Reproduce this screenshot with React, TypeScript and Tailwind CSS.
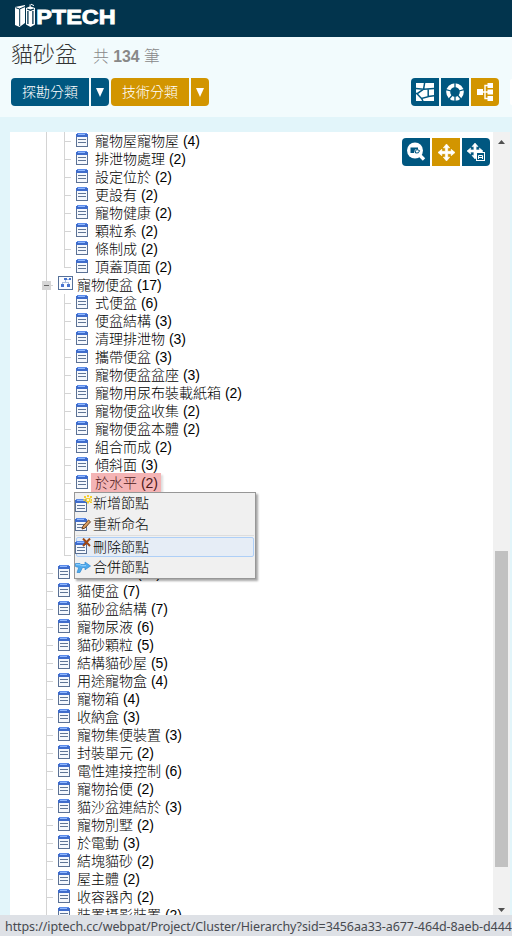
import React from "react";

type Leaf = { label: string; count: number };

const previousChildren: Leaf[] = [
  { label: "寵物屋寵物屋", count: 4 },
  { label: "排泄物處理", count: 2 },
  { label: "設定位於", count: 2 },
  { label: "更設有", count: 2 },
  { label: "寵物健康", count: 2 },
  { label: "顆粒系", count: 2 },
  { label: "條制成", count: 2 },
  { label: "頂蓋頂面", count: 2 },
];

const litterChildren: Leaf[] = [
  { label: "式便盆", count: 6 },
  { label: "便盆結構", count: 3 },
  { label: "清理排泄物", count: 3 },
  { label: "攜帶便盆", count: 3 },
  { label: "寵物便盆盆座", count: 3 },
  { label: "寵物用尿布裝載紙箱", count: 2 },
  { label: "寵物便盆收集", count: 2 },
  { label: "寵物便盆本體", count: 2 },
  { label: "組合而成", count: 2 },
  { label: "傾斜面", count: 3 },
  { label: "於水平", count: 2 },
];

const topLevel: Leaf[] = [
  { label: "貓便盆", count: 7 },
  { label: "貓砂盆結構", count: 7 },
  { label: "寵物尿液", count: 6 },
  { label: "貓砂顆粒", count: 5 },
  { label: "結構貓砂屋", count: 5 },
  { label: "用途寵物盒", count: 4 },
  { label: "寵物箱", count: 4 },
  { label: "收納盒", count: 3 },
  { label: "寵物集便裝置", count: 3 },
  { label: "封裝單元", count: 2 },
  { label: "電性連接控制", count: 6 },
  { label: "寵物拾便", count: 2 },
  { label: "貓沙盆連結於", count: 3 },
  { label: "寵物別墅", count: 2 },
  { label: "於電動", count: 3 },
  { label: "結塊貓砂", count: 2 },
  { label: "屋主體", count: 2 },
  { label: "收容器內", count: 2 },
  { label: "裝置攝影裝置", count: 2 },
];

function DocIcon() {
  return (
    <svg width="12" height="14" viewBox="0 0 12 14" className="block shrink-0" shapeRendering="crispEdges">
      <rect x="0" y="3" width="12" height="11" fill="#5b7194" />
      <rect x="1" y="4" width="10" height="9" fill="#f5f8fd" />
      <rect x="0" y="1" width="12" height="3" fill="#3f6ccb" />
      <rect x="1" y="0" width="10" height="1" fill="#5b8bea" />
      <rect x="2" y="1" width="7" height="1" fill="#8fb8ff" />
      <rect x="2" y="6" width="8" height="1" fill="#5f7596" />
      <rect x="2" y="9" width="8" height="1" fill="#5f7596" />
    </svg>
  );
}

function GroupIcon() {
  return (
    <svg width="15" height="14" viewBox="0 0 15 14" className="block shrink-0" shapeRendering="crispEdges">
      <rect x="0.5" y="0.5" width="14" height="13" fill="#fafcff" stroke="#557099" />
      <path d="M7.5 4V6.5H4.5V8M7.5 6.5H10.5V8M9 3.5H12" fill="none" stroke="#a9bddd" />
      <rect x="6" y="2" width="3" height="2" fill="#4774cf" />
      <rect x="11" y="2" width="2" height="2" fill="#4774cf" />
      <rect x="3" y="8" width="3" height="3" fill="#4774cf" />
      <rect x="9" y="8" width="3" height="3" fill="#4774cf" />
    </svg>
  );
}

function Branch({ last = false }: { last?: boolean }) {
  return (
    <span className="flex h-[18px] w-[18px] shrink-0">
      <span className={last ? "h-[10px] w-px bg-[#d4d4d4]" : "h-[18px] w-px bg-[#d4d4d4]"} />
      <span className="mt-[9px] h-px w-[6px] bg-[#d4d4d4]" />
    </span>
  );
}

function Row({ item, depth, last, selected }: { item: Leaf; depth: 1 | 2; last?: boolean; selected?: boolean }) {
  return (
    <div className="flex h-[18px] pl-[36px]">
      {depth === 2 && <span className="mr-[17px] h-[18px] w-px shrink-0 bg-[#d4d4d4]" />}
      <Branch last={last} />
      <span className="-ml-[6px] mt-px">
        <DocIcon />
      </span>
      <span
        className={
          selected
            ? "-mt-px ml-[3px] h-[20px] whitespace-pre bg-[#f4b4b5] pl-[4px] pr-[3px] leading-[20px] text-[#4c1719] shadow-[2px_2px_2px_#ddd]"
            : "ml-[7px] whitespace-pre leading-[18px]"
        }
      >
        {item.label} ({item.count})
      </span>
    </div>
  );
}

function SplitButton({ label, color }: { label: string; color: string }) {
  return (
    <div className="flex h-[28px] gap-[2px] text-[14px] text-white">
      <button className={`${color} w-[78px] rounded-l-[4px] leading-[28px]`}>{label}</button>
      <button className={`${color} flex w-[18px] items-center justify-center rounded-r-[4px]`}>
        <svg width="8" height="9" viewBox="0 0 8 9">
          <path d="M0 0H8L4 9Z" fill="#fff" />
        </svg>
      </button>
    </div>
  );
}

function IconButton({ className, children }: { className: string; children: React.ReactNode }) {
  return <button className={`flex h-[28px] w-[28px] items-center justify-center ${className}`}>{children}</button>;
}

function Logo() {
  return (
    <svg width="104" height="26" viewBox="0 0 104 26" className="block">
      <path d="M1 4L11 2V20L5.5 24L1 22Z" fill="#fff" />
      <path d="M5.7 6V23M1.5 4.6L5.5 6L11 3.6" stroke="#02344d" strokeWidth="1" fill="none" />
      <path d="M12 5L15.6 3.5V1.2H16.6V3.5L21 5V21.5L16.5 24L12 21.5Z" fill="#fff" />
      <path d="M13.9 8V21M18.9 8V21M13 6L16.5 7.2L20 6" stroke="#02344d" strokeWidth="1.3" fill="none" />
      <path d="M11.5 4V22" stroke="#02344d" strokeWidth=".9" />
      <path d="M17 1.2L20 2.6" stroke="#fff" strokeWidth="1" />
      <text
        x="22.2"
        y="21.3"
        fill="#fff"
        stroke="#fff"
        strokeWidth=".8"
        fontFamily="Liberation Sans, sans-serif"
        fontWeight="700"
        fontSize="19.5"
        textLength="79.5"
        lengthAdjust="spacingAndGlyphs"
      >
        PTECH
      </text>
    </svg>
  );
}

function MoveArrows() {
  return (
    <path
      d="M8 0L11 3.6H9.1V6.9H12.4V5L16 8L12.4 11V9.1H9.1V12.4H11L8 16L5 12.4H6.9V9.1H3.6V11L0 8L3.6 5V6.9H6.9V3.6H5Z"
      fill="#fff"
      stroke="#fff"
      strokeWidth=".6"
      strokeLinejoin="round"
    />
  );
}

function MenuDoc() {
  return (
    <g shapeRendering="crispEdges">
      <rect x="0" y="1" width="12" height="12" fill="#5b7194" />
      <rect x="1" y="4" width="10" height="8" fill="#f5f8fd" />
      <rect x="0" y="1" width="12" height="3" fill="#3f6ccb" />
      <rect x="1" y="0" width="10" height="1" fill="#5b8bea" />
      <rect x="2" y="1" width="7" height="1" fill="#8fb8ff" />
      <rect x="2" y="6" width="8" height="1" fill="#5f7596" />
      <rect x="2" y="9" width="8" height="1" fill="#5f7596" />
    </g>
  );
}

function ContextMenu() {
  return (
    <div className="absolute left-[74px] top-[492px] h-[87px] w-[182px] border border-[#979797] bg-[#f0f0f0] shadow-[2px_2px_2px_rgba(0,0,0,0.35)]">
      <div className="flex h-[21px] items-center">
        <svg width="17" height="18" viewBox="0 0 17 18" className="shrink-0">
          <g transform="translate(0 4)">
            <MenuDoc />
          </g>
          <path d="M9 1H11V3H9ZM12 0H14V2H12ZM15 1H17V3H15ZM10.5 3H15.5V7H10.5ZM8.5 4H10V6H8.5ZM16 4H17V6H16ZM12 7H14V8.5H12ZM15 6.5H17V8H15Z" fill="#f5cf34" />
          <path d="M12 4H14V6H12Z" fill="#fff8c4" />
        </svg>
        <span className="ml-px">新增節點</span>
      </div>
      <div className="flex h-[21px] items-center">
        <svg width="17" height="17" viewBox="0 0 17 17" className="shrink-0">
          <g transform="translate(0 2)">
            <MenuDoc />
          </g>
          <path d="M7 13L8 10L13.5 4L15.5 5.8L10 12Z" fill="#d9a063" stroke="#6b4020" />
        </svg>
        <span className="ml-px">重新命名</span>
      </div>
      <div className="mx-px h-px bg-[#ddd]" />
      <div className="mx-px mt-px flex h-[20px] items-center rounded-[2px] border border-[#aecff7] bg-[#e6edf6]">
        <svg width="17" height="18" viewBox="0 0 17 18" className="-ml-[2px] shrink-0">
          <g transform="translate(0 3)">
            <MenuDoc />
          </g>
          <path d="M8 .5L15 8M15 .5L8 8" stroke="#9e4814" strokeWidth="2" />
        </svg>
        <span className="ml-px leading-[16px]">刪除節點</span>
      </div>
      <div className="flex h-[21px] items-center">
        <svg width="17" height="14" viewBox="0 0 17 14" className="shrink-0">
          <path d="M.5 2.5H5L6 3.5H10V1L15.5 5L10 8.8V6.5H7.5L5 11.5H2L3.8 6.5L.5 5.5Z" fill="#4fa9ec" stroke="#2f89d2" strokeWidth=".7" />
          <path d="M1 3.7H5L6.5 4.7H11" stroke="#94d3ff" fill="none" />
        </svg>
        <span className="ml-px">合併節點</span>
      </div>
    </div>
  );
}

export default function App() {
  return (
    <div className="relative flex h-[936px] w-[512px] flex-col overflow-hidden bg-[#e2f5fa] font-['Liberation_Sans','Noto_Sans_CJK_TC',sans-serif] text-[14px] font-light text-black">
      <header className="h-[37px] shrink-0 bg-[#02344d] pl-[14px] pt-[3px]">
        <Logo />
      </header>

      <section className="h-[80px] shrink-0 bg-[#f2fbfd]">
        <div className="flex h-[41px] pl-[11px]">
          <h1 className="text-[22px] leading-[35px] text-[#333]">貓砂盆</h1>
          <p className="ml-[16px] whitespace-pre text-[15.8px] leading-[40px] text-[#888]">
            共 <b className="font-bold">134</b> 筆
          </p>
        </div>
        <div className="flex h-[28px] pl-[11px]">
          <div className="flex gap-[2px]">
            <SplitButton label="探勘分類" color="bg-[#005780]" />
            <SplitButton label="技術分類" color="bg-[#d29500]" />
          </div>
          <div className="ml-[202px] flex gap-[2px]">
            <IconButton className="rounded-l-[4px] bg-[#005780]">
              <svg width="18" height="18" viewBox="0 0 18 18">
                <rect width="18" height="18" fill="#fff" />
                <path
                  d="M8.6 0L7.6 6.2M0 5.4L7.6 6.2L18 5.4M7.6 6.2L1 10.8L5.5 15.4L12.2 13.6V6M12.2 13.6L18 12.8M5.5 15.4L7 18M0 10.6H1"
                  fill="none"
                  stroke="#005780"
                  strokeWidth="1.5"
                />
              </svg>
            </IconButton>
            <IconButton className="bg-[#005780]">
              <svg width="18" height="18" viewBox="0 0 18 18">
                <circle cx="9" cy="9" r="6.8" fill="none" stroke="#fff" strokeWidth="4" />
                <path d="M9 0V5M9 13V18M0 6.5L5 8M18 6.5L13 8M3 16L6.5 12M15 16L11.5 12" stroke="#005780" strokeWidth="1.3" />
              </svg>
            </IconButton>
            <IconButton className="rounded-r-[4px] bg-[#d29500]">
              <svg width="18" height="18" viewBox="0 0 18 18">
                <path d="M5 9H12M12 2.5H9V15.5H12" fill="none" stroke="#fff" strokeWidth="1.4" />
                <path d="M1 6H7V12H1ZM11.5 0H17V5H11.5ZM11.5 6.5H17V11.5H11.5ZM11.5 13H17V18H11.5Z" fill="#fff" />
              </svg>
            </IconButton>
          </div>
          <div className="ml-[11px] mt-px h-[26px] w-[2px] rounded-l-[2px] bg-white" />
        </div>
      </section>

      <main className="mt-[15px] flex h-[783px] shrink-0 pl-[10px]">
        <div className="h-full w-[483px] overflow-hidden bg-white">
          {previousChildren.map((item, i) => (
            <Row key={item.label} item={item} depth={2} last={i === previousChildren.length - 1} />
          ))}
          <div className="flex h-[18px] pl-[32px]">
            <span className="flex w-[9px] shrink-0 flex-col items-center">
              <span className="h-[5px] w-px bg-[#d4d4d4]" />
              <span className="flex h-[9px] w-[9px] items-center justify-center bg-[#d6d6d6]">
                <span className="h-px w-[5px] bg-[#666]" />
              </span>
              <span className="h-[4px] w-px bg-[#d4d4d4]" />
            </span>
            <span className="mt-[9px] h-px w-[2px] bg-[#d4d4d4]" />
            <span className="ml-[5px]">
              <GroupIcon />
            </span>
            <span className="ml-[4px] whitespace-pre leading-[18px]">寵物便盆 (17)</span>
          </div>
          {litterChildren.map((item) => (
            <Row key={item.label} item={item} depth={2} selected={item.label === "於水平"} />
          ))}
          {[0, 1, 2, 3].map((i) => (
            <div key={i} className="flex h-[18px] pl-[36px]">
              <span className="mr-[17px] h-[18px] w-px bg-[#d4d4d4]" />
              <Branch last={i === 3} />
            </div>
          ))}
          <div className="flex h-[18px] pl-[36px]">
            <Branch />
            <span className="-ml-[6px] mt-px">
              <DocIcon />
            </span>
            <span className="ml-[67px] leading-[18px]">(11)</span>
          </div>
          {topLevel.map((item) => (
            <Row key={item.label} item={item} depth={1} />
          ))}
        </div>
        <div className="flex w-[17px] flex-col items-center bg-[#f1f1f1]">
          <svg width="7" height="4" viewBox="0 0 7 4" className="mt-[8px]">
            <path d="M0 4L3.5 0L7 4Z" fill="#505050" />
          </svg>
          <div className="mt-[407px] h-[316px] w-[13px] bg-[#c1c1c1]" />
          <svg width="7" height="4" viewBox="0 0 7 4" className="mt-[41px]">
            <path d="M0 0H7L3.5 4Z" fill="#505050" />
          </svg>
        </div>
      </main>

      <footer className="h-[21px] shrink-0 overflow-hidden whitespace-nowrap bg-[#dee1e6] pl-[5px] font-['Noto_Sans',sans-serif] text-[12.5px] font-normal leading-[23px] tracking-[-0.09px] text-[#474a50]">
        https://iptech.cc/webpat/Project/Cluster/Hierarchy?sid=3456aa33-a677-464d-8aeb-d4443
      </footer>

      <div className="absolute left-[402px] top-[138px] flex gap-[2px]">
        <IconButton className="rounded-l-[4px] bg-[#005780]">
          <svg width="20" height="20" viewBox="0 0 20 20">
            <circle cx="9" cy="8.5" r="8" fill="#fff" />
            <path d="M13.5 13L18 17.5" stroke="#fff" strokeWidth="3.4" />
            <path d="M4.5 5.5H12V7.5H9L8 11H4.5Z" fill="#005780" />
            <path d="M13.6 8.6L12.4 10.8L9.6 11L9.2 9L11 7.6Z" fill="none" stroke="#005780" strokeWidth="1" />
          </svg>
        </IconButton>
        <IconButton className="bg-[#d29500]">
          <svg width="17" height="17" viewBox="0 0 16 16">
            <MoveArrows />
          </svg>
        </IconButton>
        <IconButton className="rounded-r-[4px] bg-[#005780]">
          <svg width="18" height="18" viewBox="0 0 18 18">
            <MoveArrows />
            <rect x="9.5" y="9.5" width="8" height="8" fill="#005780" stroke="#fff" />
            <path d="M11.5 16V12.5H15.5V16M11.5 14.5H15.5" stroke="#fff" fill="none" />
          </svg>
        </IconButton>
      </div>

      <ContextMenu />
    </div>
  );
}
